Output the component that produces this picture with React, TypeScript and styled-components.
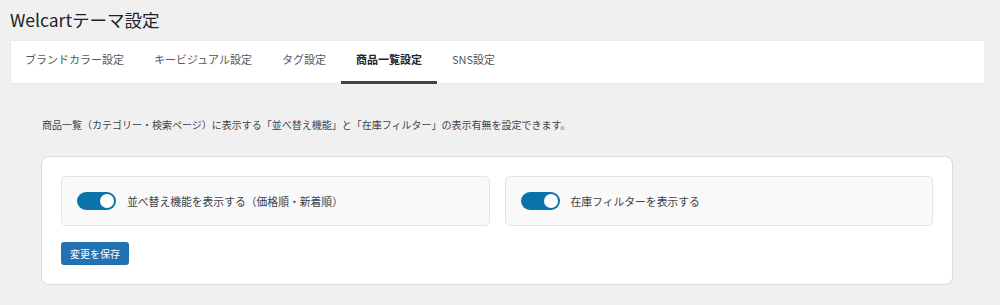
import styled, { createGlobalStyle } from 'styled-components'

const GlobalStyle = createGlobalStyle`
  html, body {
    margin: 0;
    padding: 0;
    background: #f0f0f1;
  }
  body {
    font-family: "Noto Sans CJK JP", "Noto Sans", sans-serif;
    color: #3c434a;
  }
`;

const Page = styled.div`
  padding: 0 15px 20px 10px;
`;

const Title = styled.h1`
  margin: 0;
  height: 40px;
  display: flex;
  align-items: center;
  padding-bottom: 2px;
  box-sizing: border-box;
  font-size: 17.5px;
  font-weight: 400;
  color: #1d2327;
`;

const TabBar = styled.nav`
  display: flex;
  height: 44px;
  background: #fff;
  box-shadow: 0 0 0 1px #ececec inset;
`;

const Tab = styled.div<{ $active?: boolean }>`
  display: flex;
  align-items: center;
  padding: 0 15px 3px;
  font-size: 11px;
  font-weight: ${p => (p.$active ? 700 : 400)};
  color: ${p => (p.$active ? '#1d2327' : '#50575e')};
  border-bottom: 3px solid ${p => (p.$active ? '#3c434a' : 'transparent')};
  box-sizing: border-box;
  cursor: pointer;
`;

const Content = styled.div`
  padding: 34px 32px 0 31px;
`;

const Description = styled.p`
  margin: 0 0 24px 1px;
  font-size: 10px;
  line-height: 14px;
  color: #3c434a;
`;

const Card = styled.form`
  background: #fff;
  border: 1px solid #dcdcde;
  border-radius: 8px;
  padding: 19px;
`;

const OptionGrid = styled.div`
  display: grid;
  grid-template-columns: 1fr 1fr;
  gap: 15px;
`;

const OptionItem = styled.label`
  display: flex;
  align-items: center;
  gap: 11px;
  height: 50px;
  box-sizing: border-box;
  padding: 0 15px;
  background: #f9f9f9;
  border: 1px solid #e4e4e4;
  border-radius: 5px;
  font-size: 10.8px;
  color: #3c434a;
  cursor: pointer;
`;

const Track = styled.span<{ $on: boolean }>`
  position: relative;
  flex: none;
  width: 39px;
  height: 18px;
  border-radius: 9px;
  background: ${p => (p.$on ? '#0a73aa' : '#c3c4c7')};
`;

const Knob = styled.span<{ $on: boolean }>`
  position: absolute;
  top: 2px;
  left: ${p => (p.$on ? '23px' : '2px')};
  width: 14px;
  height: 14px;
  border-radius: 50%;
  background: #fff;
`;

const SaveButton = styled.button`
  margin-top: 16px;
  height: 23px;
  padding: 0 9px;
  border: none;
  border-radius: 3px;
  background: #2271b1;
  color: #fff;
  font-family: inherit;
  font-size: 10px;
  cursor: pointer;
`;

const Toggle = ({ on }: { on: boolean }) => (
  <Track $on={on}>
    <Knob $on={on} />
  </Track>
)

const tabs = ['ブランドカラー設定', 'キービジュアル設定', 'タグ設定', '商品一覧設定', 'SNS設定']

export default function App() {
  return (
    <Page>
      <GlobalStyle />
      <Title>Welcartテーマ設定</Title>
      <TabBar>
        {tabs.map(t => (
          <Tab key={t} $active={t === '商品一覧設定'}>{t}</Tab>
        ))}
      </TabBar>
      <Content>
        <Description>
          商品一覧（カテゴリー・検索ページ）に表示する「並べ替え機能」と「在庫フィルター」の表示有無を設定できます。
        </Description>
        <Card onSubmit={e => e.preventDefault()}>
          <OptionGrid>
            <OptionItem>
              <Toggle on />
              並べ替え機能を表示する（価格順・新着順）
            </OptionItem>
            <OptionItem>
              <Toggle on />
              在庫フィルターを表示する
            </OptionItem>
          </OptionGrid>
          <SaveButton type="submit">変更を保存</SaveButton>
        </Card>
      </Content>
    </Page>
  )
}
